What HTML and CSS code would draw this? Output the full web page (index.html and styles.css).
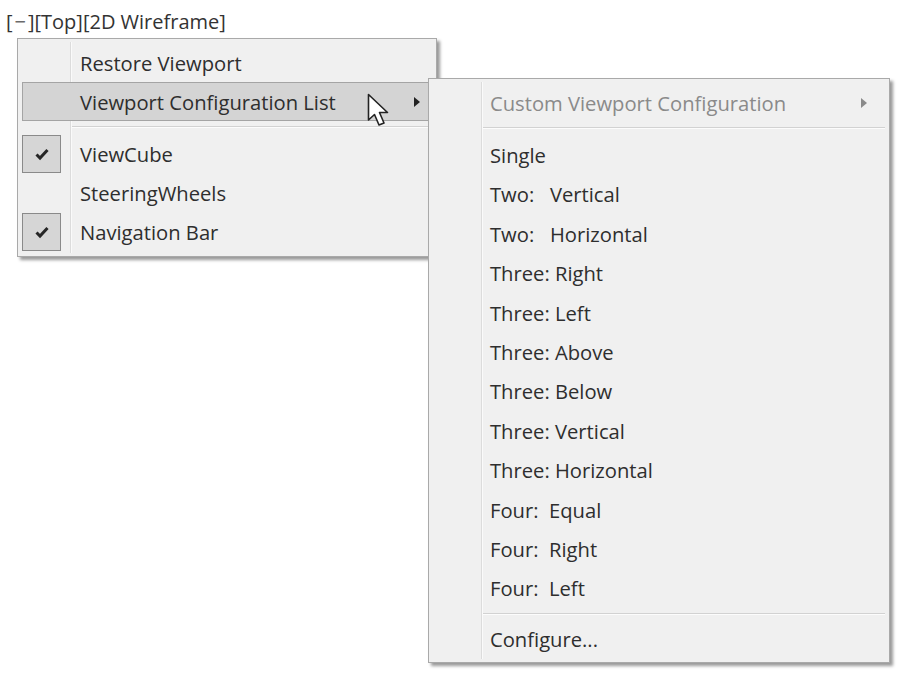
FILE: index.html
```html
<!DOCTYPE html>
<html>
<head>
  <meta name="viewport" content="width=device-width, initial-scale=1.0">
  <link rel="stylesheet" href="styles.css">
</head>
<body>
  <div class="viewport-label">[<span class="dash">−</span>][Top][2D Wireframe]</div>

  <div class="menu main-menu">
    <div class="item">
      <span class="icon"></span>
      <span class="label">Restore Viewport</span>
    </div>
    <div class="item active">
      <span class="icon"></span>
      <span class="label">Viewport Configuration List</span>
      <span class="arrow"></span>
    </div>
    <div class="sep"></div>
    <div class="item">
      <span class="icon checked">
        <svg width="16" height="14" viewBox="0 0 16 14"><path d="M2.5 7.5 L6 11 L13.5 3" fill="none" stroke="#262626" stroke-width="3"/></svg>
      </span>
      <span class="label">ViewCube</span>
    </div>
    <div class="item">
      <span class="icon"></span>
      <span class="label">SteeringWheels</span>
    </div>
    <div class="item">
      <span class="icon checked">
        <svg width="16" height="14" viewBox="0 0 16 14"><path d="M2.5 7.5 L6 11 L13.5 3" fill="none" stroke="#262626" stroke-width="3"/></svg>
      </span>
      <span class="label">Navigation Bar</span>
    </div>

    <svg class="cursor" width="26" height="38" viewBox="0 0 26 38">
      <path d="M1.5 1.5 L1.5 27 L7.5 21.5 L12 32 L17 30 L12.5 19.5 L20.5 19.5 Z" fill="#fff" stroke="#222" stroke-width="1.6" stroke-linejoin="round"/>
    </svg>
  </div>

  <div class="menu sub-menu">
    <div class="item disabled">
      <span class="icon"></span>
      <span class="label">Custom Viewport Configuration</span>
      <span class="arrow"></span>
    </div>
    <div class="sep"></div>
    <div class="item"><span class="icon"></span><span class="label">Single</span></div>
    <div class="item"><span class="icon"></span><span class="label">Two:&nbsp;&nbsp; Vertical</span></div>
    <div class="item"><span class="icon"></span><span class="label">Two:&nbsp;&nbsp; Horizontal</span></div>
    <div class="item"><span class="icon"></span><span class="label">Three: Right</span></div>
    <div class="item"><span class="icon"></span><span class="label">Three: Left</span></div>
    <div class="item"><span class="icon"></span><span class="label">Three: Above</span></div>
    <div class="item"><span class="icon"></span><span class="label">Three: Below</span></div>
    <div class="item"><span class="icon"></span><span class="label">Three: Vertical</span></div>
    <div class="item"><span class="icon"></span><span class="label">Three: Horizontal</span></div>
    <div class="item"><span class="icon"></span><span class="label">Four:&nbsp; Equal</span></div>
    <div class="item"><span class="icon"></span><span class="label">Four:&nbsp; Right</span></div>
    <div class="item"><span class="icon"></span><span class="label">Four:&nbsp; Left</span></div>
    <div class="sep"></div>
    <div class="item"><span class="icon"></span><span class="label">Configure...</span></div>
  </div>
</body>
</html>
```

FILE: styles.css
```css
body {
  margin: 0;
  padding: 0;
  background: #fff;
  font-family: "Open Sans", "Noto Sans", sans-serif;
  color: #2e2e2e;
  position: relative;
  width: 900px;
  height: 676px;
  overflow: hidden;
}

.viewport-label {
  font-size: 20px;
  color: #333;
  padding: 11px 0 0 6px;
  height: 29px;
  box-sizing: border-box;
  line-height: 22px;
}

.viewport-label .dash {
  color: #6a6a6a;
  padding: 0 2px;
}

.menu {
  background: #f0f0f0;
  border: 1px solid #a9a9a9;
  box-shadow: 3px 3px 3px rgba(0, 0, 0, 0.4);
  box-sizing: border-box;
  padding: 4px 4px 4px 4px;
  font-size: 20.2px;
  position: relative;
}

/* the light groove that separates the icon column */
.menu::before {
  content: '';
  position: absolute;
  top: 3px;
  bottom: 3px;
  left: 52px;
  width: 1px;
  background: #dcdcdc;
  box-shadow: 1px 0 0 #fafafa;
}

.main-menu {
  margin: 9px 0 0 17px;
  width: 420px;
  height: 219px;
}

.sub-menu {
  position: absolute;
  left: 428px;
  top: 78px;
  width: 462px;
  height: 585px;
  z-index: 2;
}

.item {
  display: flex;
  align-items: center;
  height: 39px;
  box-sizing: border-box;
  position: relative;
  z-index: 1;
}

.sub-menu .item {
  height: 39.4px;
}

.item .icon {
  width: 39px;
  height: 38px;
  margin-right: 19px;
  display: flex;
  align-items: center;
  justify-content: center;
  box-sizing: border-box;
  flex-shrink: 0;
}

.sub-menu .item .icon {
  margin-right: 18px;
}

.item .icon.checked {
  background: #d6d6d6;
  border: 1px solid #8a8a8a;
}

.item .label {
  flex: 1;
  white-space: pre;
}

.item .arrow {
  width: 0;
  height: 0;
  border-top: 5px solid transparent;
  border-bottom: 5px solid transparent;
  border-left: 6px solid #222;
  margin-right: 11px;
}

.item.active {
  background: #d4d4d4;
  border: 1px solid #a4a4a4;
}

.item.active .icon {
  margin-left: -1px;
}

.item.disabled {
  color: #8a8a8a;
}

.item.disabled .arrow {
  border-left-color: #8a8a8a;
  margin-right: 18px;
}

.sep {
  height: 13px;
  margin-left: 50px;
  position: relative;
}

.sep::after {
  content: '';
  position: absolute;
  left: 0;
  right: 0;
  top: 5px;
  height: 1px;
  background: #d2d2d2;
  box-shadow: 0 1px 0 #fcfcfc;
}

.sub-menu .sep {
  height: 11px;
}

.sub-menu .sep:nth-child(2) {
  height: 13px;
}

.cursor {
  position: absolute;
  left: 349px;
  top: 54px;
  z-index: 3;
}
```
